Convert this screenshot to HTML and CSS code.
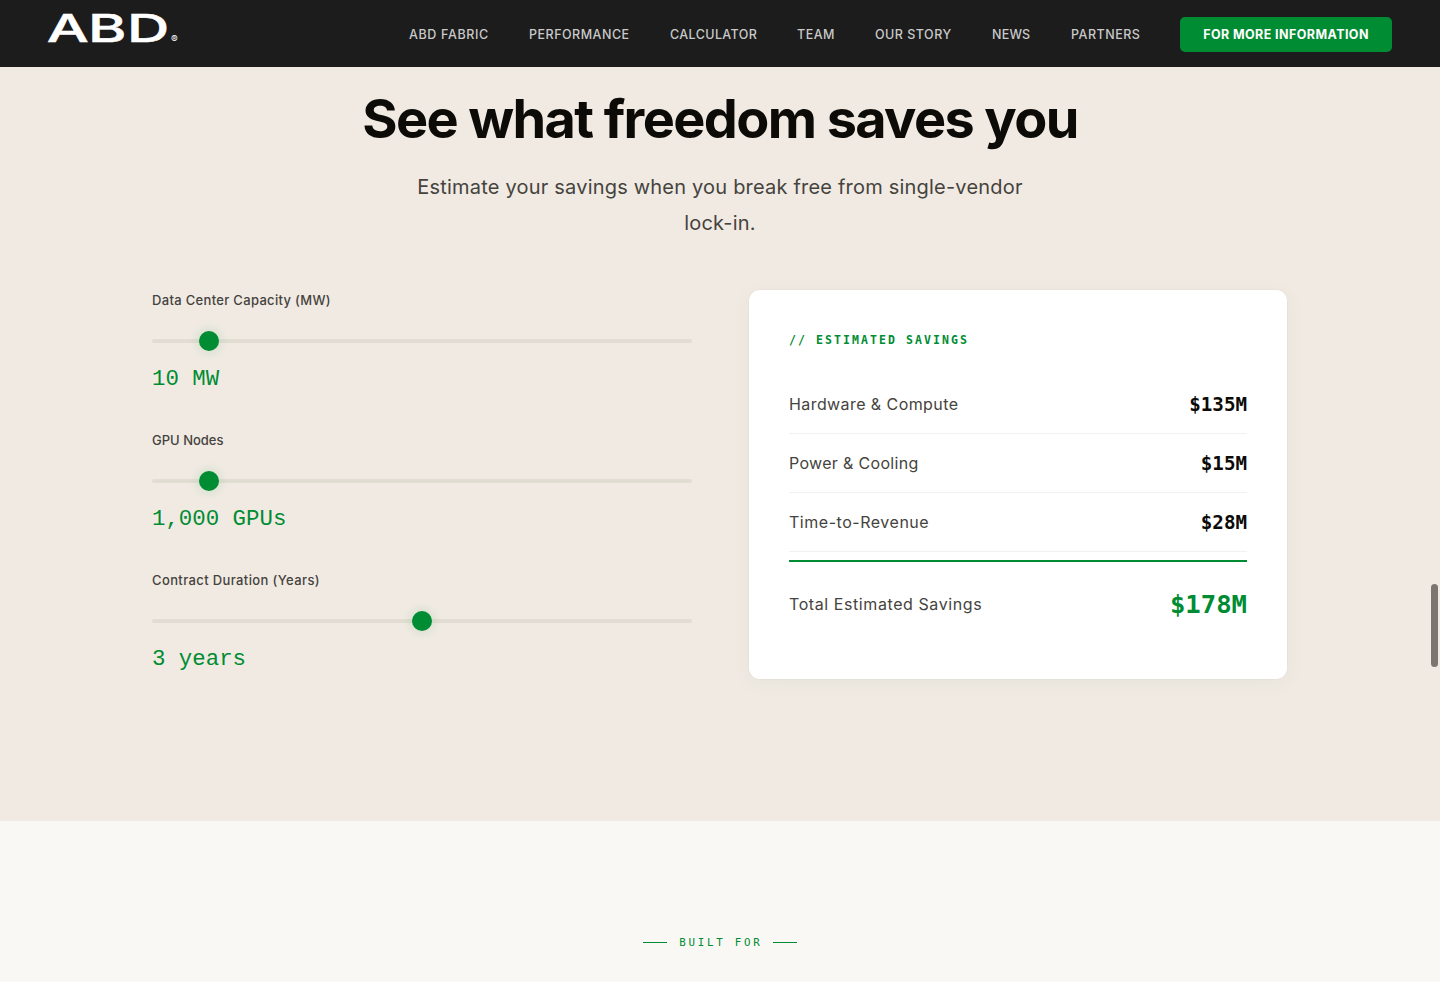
FILE: index.html
```html
<!DOCTYPE html>
<html lang="en">
<head>
  <meta charset="UTF-8" />
  <meta name="viewport" content="width=device-width, initial-scale=1.0" />
  <title>ABD - Savings Calculator</title>
  <link rel="stylesheet" href="styles.css">
</head>
<body>

  <header class="navbar">
    <a href="#" class="logo" aria-label="ABD">
      <svg width="136" height="60" viewBox="0 0 136 60">
        <g class="logo-word">
          <text transform="translate(-1.2 42) scale(1.54 1)">A</text>
          <text transform="translate(40 42) scale(1.52 1)">B</text>
          <text transform="translate(79 42) scale(1.52 1)">D</text>
        </g>
        <text class="logo-mark" x="123" y="43">®</text>
      </svg>
    </a>
    <nav class="nav-links">
      <a href="#fabric" class="link-fabric">ABD Fabric</a>
      <a href="#performance" class="link-performance">Performance</a>
      <a href="#calculator" class="link-calculator">Calculator</a>
      <a href="#team" class="link-team">Team</a>
      <a href="#story" class="link-story">Our Story</a>
      <a href="#news" class="link-news">News</a>
      <a href="#partners" class="link-partners">Partners</a>
      <a href="#info" class="nav-cta">For More Information</a>
    </nav>
  </header>

  <section class="calculator" id="calculator">
    <h2>See what freedom saves you</h2>
    <p class="subtitle">Estimate your savings when you break free from single-vendor lock-in.</p>

    <div class="calc-grid">
      <form class="controls">
        <div class="control">
          <label class="label-capacity" for="capacity">Data Center Capacity (MW)</label>
          <input type="range" id="capacity" min="1" max="100" value="10">
          <output id="capacityValue">10 MW</output>
        </div>
        <div class="control">
          <label class="label-gpus" for="gpus">GPU Nodes</label>
          <input type="range" id="gpus" min="100" max="10000" step="100" value="1000">
          <output id="gpusValue">1,000 GPUs</output>
        </div>
        <div class="control">
          <label class="label-years" for="years">Contract Duration (Years)</label>
          <input type="range" id="years" min="1" max="5" value="3">
          <output id="yearsValue">3 years</output>
        </div>
      </form>

      <div class="card">
        <h3>// Estimated Savings</h3>
        <div class="row">
          <span class="row-hardware">Hardware &amp; Compute</span>
          <strong>$135M</strong>
        </div>
        <div class="row">
          <span class="row-power">Power &amp; Cooling</span>
          <strong>$15M</strong>
        </div>
        <div class="row">
          <span class="row-time">Time-to-Revenue</span>
          <strong>$28M</strong>
        </div>
        <div class="row total">
          <span class="row-total">Total Estimated Savings</span>
          <strong>$178M</strong>
        </div>
      </div>
    </div>
  </section>

  <section class="built-for">
    <p class="eyebrow">Built for</p>
  </section>

  <div class="scroll-thumb"></div>

</body>
</html>
```
FILE: styles.css
```css
* {
  box-sizing: border-box;
  margin: 0;
  padding: 0;
}
body {
  font-family: Inter, "Liberation Sans", sans-serif;
  background-color: #f9f8f4;
  color: #0c0b08;
  height: 982px;
  overflow: hidden;
}
a {
  text-decoration: none;
}

/* Header */
.navbar {
  height: 67px;
  padding: 0 48px;
  background-color: #1c1c1c;
  display: flex;
  justify-content: space-between;
}
.logo svg {
  display: block;
  overflow: visible;
}
.logo-word {
  font-size: 38.5px;
  font-weight: 500;
  fill: #fff;
  stroke: #fff;
  stroke-width: 0.5px;
}
.logo-mark {
  font-size: 10px;
  fill: #fff;
}
.nav-links {
  display: flex;
  align-items: center;
  gap: 40px;
  padding-top: 2px;
}
.nav-links a {
  font-size: 12.5px;
  font-weight: 500;
  letter-spacing: 0.5px;
  text-transform: uppercase;
  white-space: nowrap;
  color: #c9c9c9;
}
.nav-links .link-fabric {
  width: 80px;
  letter-spacing: 0.65px;
}
.nav-links .link-performance { width: 101px; }
.nav-links .link-calculator {
  width: 87px;
  letter-spacing: 0.4px;
}
.nav-links .link-team { width: 38px; }
.nav-links .link-story { width: 77px; }
.nav-links .link-news {
  width: 39px;
  letter-spacing: 0.2px;
}
.nav-links .link-partners { width: 69px; }
.nav-links .nav-cta {
  width: 212px;
  height: 35px;
  line-height: 35px;
  text-align: center;
  font-weight: 700;
  letter-spacing: 0.42px;
  color: #fff;
  background-color: #008c32;
  border-radius: 5px;
}

/* Calculator */
.calculator {
  height: 754px;
  padding-top: 18px;
  background-color: #f0eae3;
}
.calculator h2 {
  font-size: 54px;
  line-height: 68px;
  font-weight: 700;
  letter-spacing: -1.6px;
  text-align: center;
}
.subtitle {
  width: 640px;
  margin: 16px auto 0;
  font-size: 20px;
  line-height: 36px;
  letter-spacing: 0.2px;
  text-align: center;
  color: #45433d;
}
.calc-grid {
  width: 1136px;
  margin: 48px auto 0;
  display: grid;
  grid-template-columns: 1fr 1fr;
  gap: 56px;
}
.control {
  height: 140px;
}
.control label {
  display: block;
  font-size: 13px;
  font-weight: 500;
  line-height: 22px;
  color: #45433d;
}
.label-capacity {
  letter-spacing: 0.32px;
}
.label-years {
  letter-spacing: 0.38px;
}
.control input {
  appearance: none;
  display: block;
  width: 100%;
  height: 4px;
  margin: 28px 0 22px;
  background-color: #e1ddd2;
  border-radius: 2px;
}
.control input::-webkit-slider-thumb {
  appearance: none;
  width: 20px;
  height: 20px;
  background-color: #008c32;
  border-radius: 50%;
  box-shadow: 0 0 12px rgba(0, 160, 50, 0.2);
}
.control output {
  display: block;
  font-family: "Liberation Mono", monospace;
  font-size: 22.4px;
  line-height: 28px;
  color: #008c32;
}

.card {
  height: 391px;
  padding: 40px;
  background-color: #fff;
  background-clip: padding-box;
  border: 1px solid rgba(0, 60, 20, 0.02);
  border-radius: 12px;
  box-shadow: 0 4px 20px rgba(0, 80, 20, 0.04);
}
.card h3 {
  font-family: "DejaVu Sans Mono", monospace;
  font-size: 11.5px;
  line-height: 20px;
  letter-spacing: 2.08px;
  text-transform: uppercase;
  color: #008c32;
  margin-bottom: 25px;
}
.row {
  height: 59px;
  display: flex;
  justify-content: space-between;
  align-items: center;
  border-bottom: 1px solid #f1f1ef;
}
.row span {
  font-size: 16px;
  color: #45433d;
}
.row-hardware {
  letter-spacing: 0.42px;
}
.row-power {
  letter-spacing: 0.32px;
}
.row-time {
  letter-spacing: 0.53px;
}
.row-total {
  letter-spacing: 0.58px;
}
.row strong {
  font-family: "DejaVu Sans Mono", monospace;
  font-size: 19.2px;
}
.row.total {
  height: 86px;
  margin-top: 8px;
  border-top: 2px solid #008c32;
  border-bottom: none;
}
.row.total strong {
  font-size: 25.6px;
  color: #008c32;
}

/* Built for */
.built-for {
  padding-top: 112px;
}
.eyebrow {
  display: flex;
  justify-content: center;
  gap: 12px;
  font-family: "DejaVu Sans Mono", monospace;
  font-size: 10.8px;
  line-height: 20px;
  letter-spacing: 2.75px;
  text-indent: 0;
  text-transform: uppercase;
  color: #008c32;
}
.eyebrow::before,
.eyebrow::after {
  content: "";
  width: 24px;
  height: 1px;
  margin-top: 9px;
  background-color: #008c32;
}
.eyebrow::after {
  margin-left: -2px;
}

.scroll-thumb {
  position: fixed;
  top: 584px;
  right: 2px;
  width: 7px;
  height: 83px;
  border-radius: 4px;
  background-color: #7b7770;
}
```
